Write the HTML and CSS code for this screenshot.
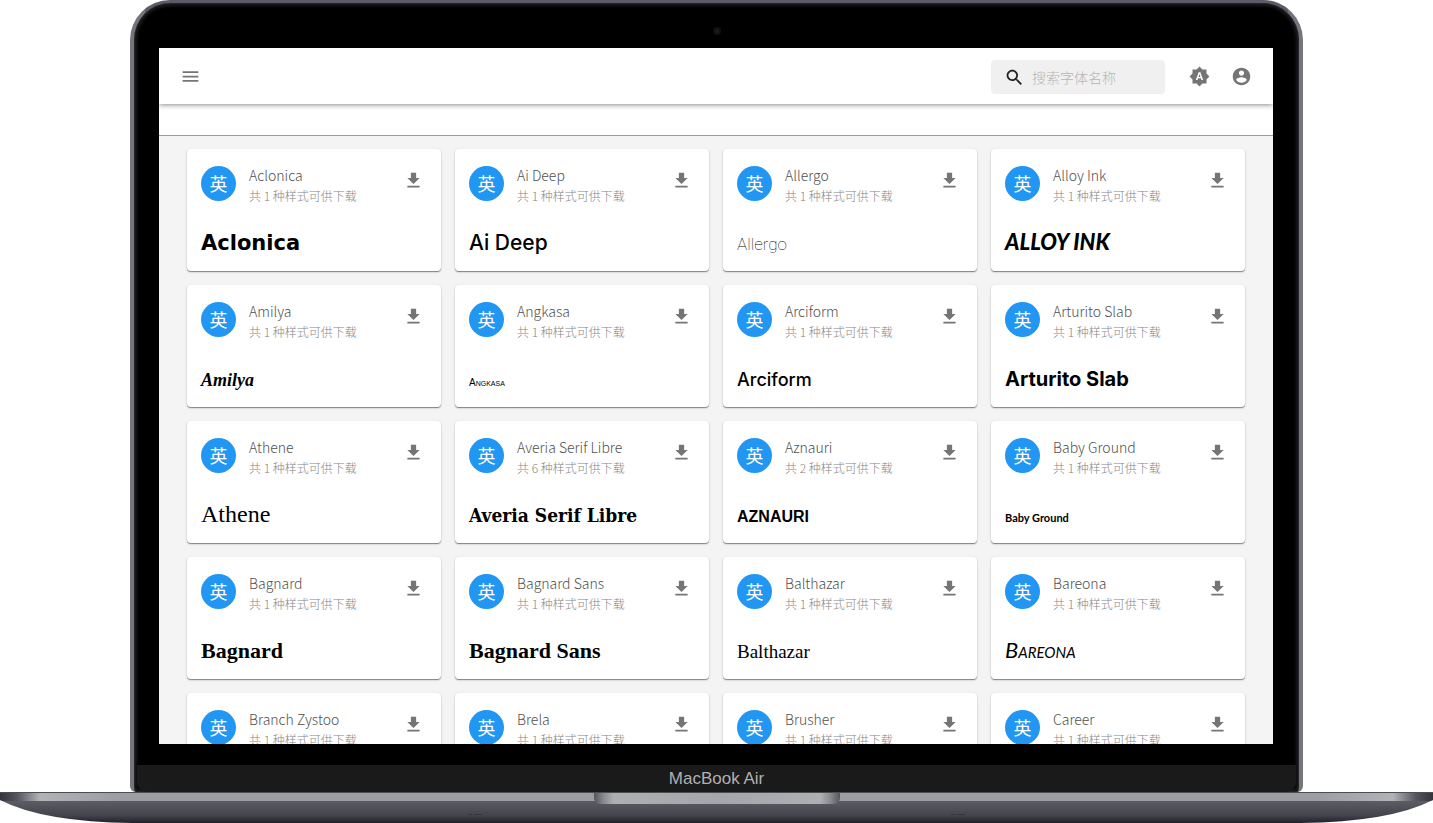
FILE: index.html
```
<!DOCTYPE html>
<html lang="zh-CN">
<head>
<meta charset="utf-8">
<title>字体</title>
<link rel="stylesheet" href="styles.css">
</head>
<body>
<div class="device">
  <div class="lid">
    <div class="bezel-top"><span class="camera"></span></div>
    <div class="screen">
      <header class="appbar">
        <button class="icon-btn" type="button" aria-label="菜单"><svg class="icon" viewBox="0 0 24 24"><path d="M3 18h18v-2H3v2zm0-5h18v-2H3v2zm0-7v2h18V6H3z"/></svg></button>
        <div class="actions">
          <label class="search">
            <svg class="icon" viewBox="0 0 24 24"><path d="M15.5 14h-.79l-.28-.27C15.41 12.59 16 11.11 16 9.5 16 5.91 13.09 3 9.5 3S3 5.91 3 9.5 5.91 16 9.5 16c1.61 0 3.09-.59 4.23-1.57l.27.28v.79l5 4.99L20.49 19l-4.99-5zm-6 0C7.01 14 5 11.99 5 9.5S7.01 5 9.5 5 14 7.01 14 9.5 11.99 14 9.5 14z"/></svg>
            <input type="text" placeholder="搜索字体名称" aria-label="搜索字体名称">
          </label>
          <button class="icon-btn" type="button" aria-label="主题"><svg class="icon" viewBox="0 0 24 24"><path d="M10.85 12.65h2.3L12 9l-1.15 3.65zM20 8.69V4h-4.69L12 .69 8.69 4H4v4.69L.69 12 4 15.31V20h4.69L12 23.31 15.31 20H20v-4.69L23.31 12 20 8.69zM14.3 16l-.7-2h-3.2l-.7 2H7.8L11 7h2l3.2 9h-1.9z"/></svg></button>
          <button class="icon-btn" type="button" aria-label="账户"><svg class="icon" viewBox="0 0 24 24"><path d="M12 2C6.48 2 2 6.48 2 12s4.48 10 10 10 10-4.48 10-10S17.52 2 12 2zm0 3c1.66 0 3 1.34 3 3s-1.34 3-3 3-3-1.34-3-3 1.34-3 3-3zm0 14.2c-2.5 0-4.71-1.28-6-3.22.03-1.99 4-3.08 6-3.08 1.99 0 5.97 1.09 6 3.08-1.29 1.94-3.5 3.22-6 3.22z"/></svg></button>
        </div>
      </header>
      <div class="subbar"></div>
      <main class="grid" id="grid"></main>
    </div>
    <div class="bezel-bottom"></div>
    <div class="chin">MacBook Air</div>
  </div>
  <div class="base">
    <svg class="base-shape" viewBox="0 0 1433 31" preserveAspectRatio="none" aria-hidden="true">
      <defs>
        <linearGradient id="body" x1="0" y1="0" x2="0" y2="1">
          <stop offset="0" stop-color="#696a70"/><stop offset=".35" stop-color="#595a61"/><stop offset=".75" stop-color="#43444c"/><stop offset="1" stop-color="#20202c"/>
        </linearGradient>
        <linearGradient id="strip" x1="0" y1="0" x2="1" y2="0">
          <stop offset="0" stop-color="#32333c"/><stop offset=".012" stop-color="#55565e"/><stop offset=".028" stop-color="#b2b3b7"/><stop offset=".08" stop-color="#9d9ea4"/><stop offset=".92" stop-color="#9d9ea4"/><stop offset=".972" stop-color="#b2b3b7"/><stop offset=".988" stop-color="#55565e"/><stop offset="1" stop-color="#32333c"/>
        </linearGradient>
      </defs>
      <path fill="url(#body)" d="M0 0H1433V8Q1390 30 1300 31H133Q43 30 0 8Z"/>
      <path fill="url(#strip)" d="M0 1H1433V8L1430 9H3L0 8Z"/>
      <path fill="#4c4d52" d="M0 0H1433V1H0Z"/>
      <path fill="#33343c" d="M468 22h4v1h-4zM474 22h8v1h-8zM951 22h4v1h-4zM957 22h8v1h-8z"/>
    </svg>
    <span class="notch"></span>
  </div>
</div>
<script src="app.js"></script>
</body>
</html>
```
FILE: styles.css
```
* { box-sizing: border-box; }
body {
  margin: 0;
  background: #fff;
  font-family: "Noto Sans CJK SC", sans-serif;
  font-weight: 300;
}
.device { display: flex; flex-direction: column; height: 100vh; overflow: hidden; }

.lid {
  flex: 1;
  min-height: 0;
  display: flex;
  flex-direction: column;
  margin: 0 130px;
  background: #000;
  border: 4px solid #74757d;
  border-top: 3px solid #5c5c66;
  border-bottom: 0;
  border-radius: 40px 40px 6px 6px;
  box-shadow: inset 0 0 0 1px #232327, inset 0 0 3px 3px #1a1a1c;
}
.bezel-top { height: 45px; display: flex; justify-content: center; padding-top: 24px; }
.camera { width: 8px; height: 8px; border-radius: 50%; background: #1b1b1e; border: 2px solid #101012; }
.screen { flex: 1; min-height: 0; overflow: hidden; margin: 0 26px 0 25px; background: #f4f4f4; }
.bezel-bottom { height: 21px; }
.chin {
  height: 27px;
  margin: 0 3px;
  border-radius: 0 0 10px 10px;
  background: #1a1a1a;
  color: #b0b0b4;
  font: 400 17px/28px "Liberation Sans", sans-serif;
  text-align: center;
}

.base { position: relative; }
.base-shape { display: block; width: 100%; height: 31px; }
.notch {
  position: absolute;
  top: 1px;
  left: 50%;
  width: 246px;
  height: 11px;
  margin-left: -123px;
  border-radius: 0 0 6px 6px;
  background: linear-gradient(90deg, #55565c, #8a8b90 4%, #aeafb3 8%, #a5a6ab 50%, #aeafb3 92%, #8a8b90 96%, #55565c);
}

.appbar {
  position: relative;
  display: flex;
  align-items: center;
  justify-content: space-between;
  height: 56px;
  padding: 0 21px;
  background: #fff;
  box-shadow: 0 1px 5px rgba(0, 0, 0, .45);
}
.actions { display: flex; align-items: center; gap: 21px; }
.icon { display: block; flex: none; width: 21px; height: 21px; fill: currentColor; }
.icon-btn { padding: 0; border: 0; background: none; color: #757575; }
.search {
  display: flex;
  align-items: center;
  gap: 7px;
  width: 174px;
  height: 34px;
  padding: 0 13px;
  margin: 2px 3px 0 0;
  border-radius: 4px;
  background: #f0f0f0;
  color: #212121;
}
.search input {
  flex: 1;
  min-width: 0;
  padding: 0;
  border: 0;
  outline: 0;
  background: none;
  font: inherit;
  font-size: 14px;
  line-height: 20px;
}
.search input::placeholder { color: #b5b5b5; opacity: 1; }
.subbar { height: 32px; background: #fff; border-bottom: 1px solid #9c9c9c; }

.grid {
  display: grid;
  grid-template-columns: repeat(4, minmax(0, 1fr));
  gap: 14px;
  padding: 13px 28px;
}
.card {
  height: 122px;
  padding: 17px 14px 0;
  border-radius: 4px;
  background: #fff;
  box-shadow: 0 1px 1px rgba(0, 0, 0, .42), 0 1px 3px rgba(0, 0, 0, .12);
}
.card-head { display: flex; gap: 13px; }
.avatar {
  flex: none;
  width: 35px;
  height: 35px;
  border-radius: 50%;
  background: #2196f3;
  color: #fff;
  font-size: 18px;
  font-weight: 400;
  line-height: 35px;
  text-align: center;
}
.meta { flex: 1; min-width: 0; }
.name { margin: 0; color: #505050; font-size: 14px; font-weight: 300; line-height: 18px; }
.count { margin: 0; color: #858585; font-size: 12px; line-height: 24px; white-space: nowrap; }
.download { align-self: flex-start; margin: 4px 3px 0 0; }

.sample { margin: 16px 0 0; color: #000; font-size: 20px; line-height: 36px; white-space: nowrap; }
.sample span { line-height: 1; }
.aclonica { font: 700 21px "DejaVu Sans", sans-serif; }
.ai-deep { font: 500 21px Inter, sans-serif; }
.allergo { font: 100 17px Roboto, sans-serif; }
.alloy-ink { font: italic 900 22px Lato, sans-serif; }
.amilya { font: italic 700 18px "Liberation Serif", serif; }
.angkasa { font: small-caps 400 10px "Liberation Sans", sans-serif; }
.arciform { font: 500 18px Inter, sans-serif; }
.arturito { font: 700 20px Inter, sans-serif; }
.athene { font: 400 24px "Liberation Serif", serif; }
.averia { font: 700 19px "DejaVu Serif Condensed", "DejaVu Serif", serif; }
.aznauri { font: 700 16px "Liberation Sans", sans-serif; }
.baby { font: 700 11px Lato, sans-serif; }
.bagnard { font: 700 22px "Liberation Serif", serif; }
.balthazar { font: 400 19px "Liberation Serif", serif; }
.bareona { font: italic small-caps 400 22px Lato, sans-serif; }
```
FILE: app.js
```
const fonts = [
  ["Aclonica", 1, "aclonica"], ["Ai Deep", 1, "ai-deep"], ["Allergo", 1, "allergo"], ["Alloy Ink", 1, "alloy-ink", "ALLOY INK"],
  ["Amilya", 1, "amilya"], ["Angkasa", 1, "angkasa"], ["Arciform", 1, "arciform"], ["Arturito Slab", 1, "arturito"],
  ["Athene", 1, "athene"], ["Averia Serif Libre", 6, "averia"], ["Aznauri", 2, "aznauri", "AZNAURI"], ["Baby Ground", 1, "baby"],
  ["Bagnard", 1, "bagnard"], ["Bagnard Sans", 1, "bagnard"], ["Balthazar", 1, "balthazar"], ["Bareona", 1, "bareona"],
  ["Branch Zystoo", 1], ["Brela", 1], ["Brusher", 1], ["Career", 1]
];

document.getElementById("grid").innerHTML = fonts.map(([name, count, style, sample]) => `
  <article class="card">
    <div class="card-head">
      <span class="avatar">英</span>
      <div class="meta"><h2 class="name">${name}</h2><p class="count">共 ${count} 种样式可供下载</p></div>
      <button class="icon-btn download" type="button" aria-label="下载 ${name}"><svg class="icon" viewBox="0 0 24 24"><path d="M19 9h-4V3H9v6H5l7 7 7-7zM5 18v2h14v-2H5z"/></svg></button>
    </div>
    ${style ? `<p class="sample"><span class="${style}">${sample || name}</span></p>` : ""}
  </article>`).join("");
```
